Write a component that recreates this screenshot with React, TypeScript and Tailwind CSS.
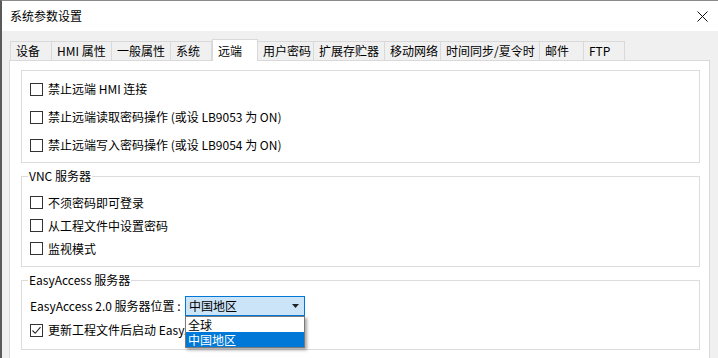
import React from 'react';

const tabs = [
  { label: '设备', w: 42 },
  { label: 'HMI 属性', w: 60 },
  { label: '一般属性', w: 59 },
  { label: '系统', w: 41 },
  { label: '远端', w: 46, active: true },
  { label: '用户密码', w: 56 },
  { label: '扩展存贮器', w: 71 },
  { label: '移动网络', w: 56 },
  { label: '时间同步/夏令时', w: 99 },
  { label: '邮件', w: 44 },
  { label: 'FTP', w: 41 },
];

const CheckBox = ({ checked = false }: { checked?: boolean }) => (
  <span className="flex h-[13px] w-[13px] shrink-0 items-center justify-center border border-[#333333] bg-white">
    {checked && (
      <svg width="11" height="11" viewBox="0 0 11 11">
        <polyline points="1.5,5.5 4.2,8.3 9.5,2.2" fill="none" stroke="#222" strokeWidth="1.1" />
      </svg>
    )}
  </span>
);

const CheckRow = ({ label, h, checked }: { label: string; h: string; checked?: boolean }) => (
  <div className={`flex items-center gap-[5px] ${h}`}>
    <CheckBox checked={checked} />
    <span className="whitespace-nowrap">{label}</span>
  </div>
);

const Group = ({ title, className, children }: { title: string; className: string; children?: React.ReactNode }) => (
  <fieldset className={`border border-[#dcdcdc] px-[8px] ${className}`}>
    <legend className="ml-[-2px] px-[1px] leading-[16px]">{title}</legend>
    {children}
  </fieldset>
);

export default function App() {
  return (
    <div className="flex h-[358px] w-[718px] flex-col overflow-hidden border-l-2 border-t border-l-[#5a5a5a] border-t-[#8a8a8a] bg-[#f0f0f0] font-['Noto_Sans_CJK_SC',sans-serif] text-[12px] text-black">
      {/* title bar */}
      <div className="flex h-[30px] shrink-0 items-center justify-between bg-white pl-[8px] pr-[10px]">
        <span className="text-[12px]">系统参数设置</span>
        <svg width="11" height="11" viewBox="0 0 11 11">
          <path d="M0.5 0.5 L10.5 10.5 M10.5 0.5 L0.5 10.5" stroke="#111" strokeWidth="1" />
        </svg>
      </div>

      <div className="flex min-h-0 flex-1 flex-col pl-[7px] pr-[8px] pt-[8px]">
        {/* tabs */}
        <div className="ml-[1px] flex h-[21px] shrink-0 items-end">
          {tabs.map((t) =>
            t.active ? (
              <div
                key={t.label}
                style={{ width: t.w }}
                className="relative z-10 -mb-[1px] flex h-[22px] items-start border border-b-0 border-[#d9d9d9] bg-white pl-[5px] pt-[2px]"
              >
                {t.label}
              </div>
            ) : (
              <div
                key={t.label}
                style={{ width: t.w }}
                className="flex h-[19px] items-center border border-b-0 border-l-0 border-[#d9d9d9] bg-[#f0f0f0] pl-[5px] first:border-l"
              >
                {t.label}
              </div>
            )
          )}
        </div>

        {/* panel */}
        <div className="relative flex min-h-0 flex-1 flex-col border border-b-0 border-[#d9d9d9] bg-white pl-[11px] pr-[9px] pt-[9px]">
          <div className="flex h-[93px] shrink-0 flex-col border border-[#dcdcdc] px-[8px] pt-[4px]">
            <CheckRow h="h-[28px]" label="禁止远端 HMI 连接" />
            <CheckRow h="h-[28px]" label="禁止远端读取密码操作 (或设 LB9053 为 ON)" />
            <CheckRow h="h-[28px]" label="禁止远端写入密码操作 (或设 LB9054 为 ON)" />
          </div>

          <Group title="VNC 服务器" className="mt-[5px] h-[99px] shrink-0 pt-[7px]">
            <CheckRow h="h-[23px]" label="不须密码即可登录" />
            <CheckRow h="h-[23px]" label="从工程文件中设置密码" />
            <CheckRow h="h-[23px]" label="监视模式" />
          </Group>

          <Group title="EasyAccess 服务器" className="mt-[5px] h-[78px] shrink-0 pt-[8px]">
            <div className="flex h-[20px] items-center">
              <span className="w-[155px] whitespace-nowrap">EasyAccess 2.0 服务器位置 :</span>
              <div className="relative">
                <div className="flex h-[20px] w-[120px] items-center justify-between border border-[#0078d7] bg-[#cce4f7] pl-[3px] pr-[5px]">
                  <span>中国地区</span>
                  <svg width="7" height="4" viewBox="0 0 7 4">
                    <path d="M0 0 H7 L3.5 4 Z" fill="#222" />
                  </svg>
                </div>
                <div className="absolute left-0 top-[20px] z-20 w-[120px] border border-[#7a7a7a] bg-white shadow-[2px_2px_3px_rgba(0,0,0,0.35)]">
                  <div className="flex h-[15px] items-center pl-[2px]">全球</div>
                  <div className="flex h-[15px] items-center bg-[#0078d7] pl-[2px] text-white">中国地区</div>
                </div>
              </div>
            </div>
            <div className="mt-[4px]">
              <CheckRow h="h-[20px]" checked label="更新工程文件后启动 EasyAccess 2.0" />
            </div>
          </Group>

          <Group title="cMT Viewer" className="mt-[5px] h-[60px] shrink-0 pt-[8px]" />
        </div>
      </div>
    </div>
  );
}
